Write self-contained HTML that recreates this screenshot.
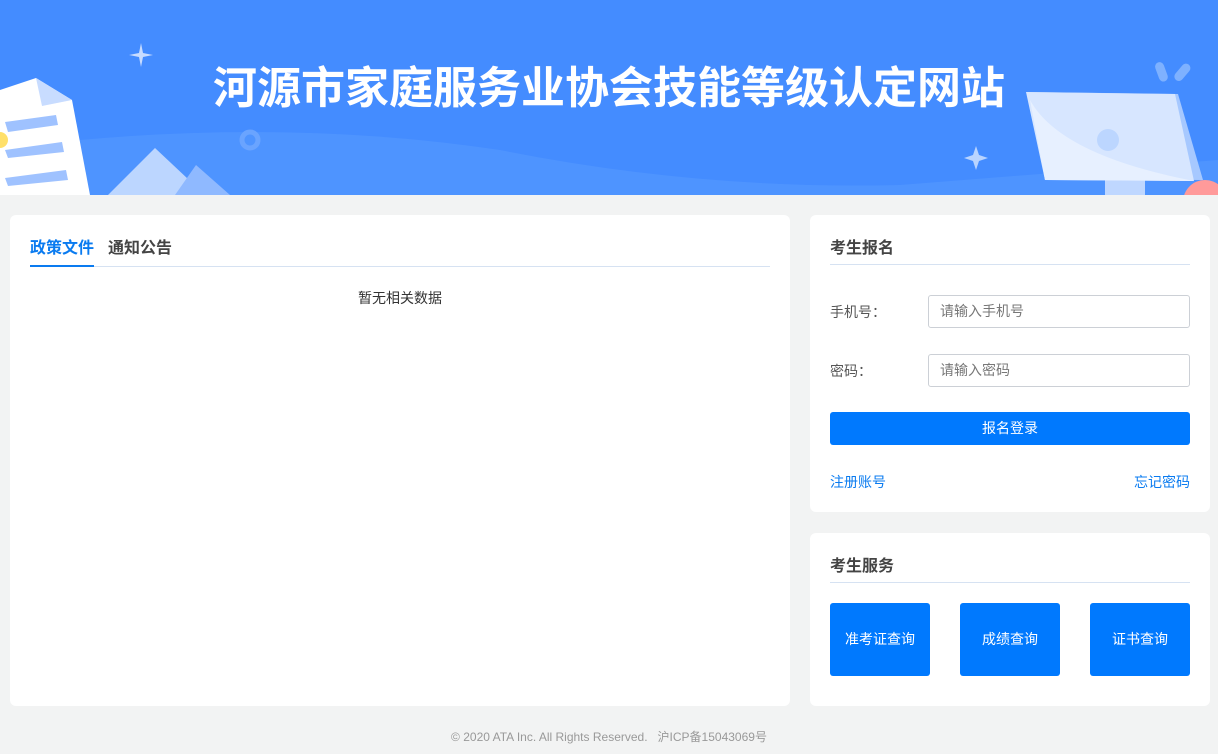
<!DOCTYPE html>
<html><head><meta charset="utf-8"><style>
*{margin:0;padding:0;box-sizing:border-box}
body{width:1218px;height:754px;background:#f2f3f3;font-family:"Liberation Sans","Noto Sans CJK SC",sans-serif;position:relative;overflow:hidden;color:#333}
.banner{position:absolute;left:0;top:0;width:1218px;height:195px;background:#448cff;overflow:hidden}
.title{position:absolute;left:0;width:1218px;top:59px;text-align:center;color:#fff;font-size:44px;font-weight:bold;line-height:60px}
.card{position:absolute;background:#fff;border-radius:6px}
.h{position:absolute;font-size:16px;font-weight:bold;color:#333}
.line{position:absolute;height:1px;background:#d6e2f2}
.lbl{position:absolute;font-size:14px;color:#555}
.inp{position:absolute;left:118px;width:262px;height:33px;border:1px solid #ccd0d6;border-radius:3px;font-size:14px;color:#777;padding-left:11px;line-height:31px}
.btn{position:absolute;background:#0079fe;color:#fff;border-radius:3px;font-size:14px;text-align:center}
.lnk{position:absolute;font-size:14px;color:#0a7bf0;top:257px}
</style></head><body>
<div class="banner">
<svg width="1218" height="195" style="position:absolute;left:0;top:0">
<path d="M80 140 Q300 120 500 150 Q700 190 900 185 L1218 160 L1218 195 L60 195Z" fill="#5297ff" opacity="0.7"/>
<path d="M141 43 L143 53 L153 55 L143 57 L141 67 L139 57 L129 55 L139 53Z" fill="#c8dcff"/>
<circle cx="250" cy="140" r="8" fill="none" stroke="#6aa4ff" stroke-width="5"/>
<polygon points="108,195 155,148 205,195" fill="#bcd6ff"/>
<polygon points="175,195 196,165 230,195" fill="#8fb9ff"/>
<polygon points="0,90 36,78 72,100 90,195 0,195" fill="#fff"/>
<polygon points="36,78 72,100 42,106" fill="#c8dcff"/>
<polygon points="5,122 56,115 58,125 8,132" fill="#9fc2ff"/>
<polygon points="5,150 62,142 64,152 8,158" fill="#9fc2ff"/>
<polygon points="5,178 66,170 68,180 8,186" fill="#9fc2ff"/>
<circle cx="0" cy="140" r="8" fill="#ffe06a"/>
<path d="M976 146 L979 155 L988 158 L979 161 L976 170 L973 161 L964 158 L973 155Z" fill="#b9d4ff"/>
<rect x="1157" y="62" width="9" height="20" rx="4.5" transform="rotate(-20 1161 72)" fill="#7eb1ff"/>
<rect x="1178" y="62" width="9" height="20" rx="4.5" transform="rotate(40 1182 72)" fill="#7eb1ff"/>
<rect x="1105" y="175" width="40" height="20" fill="#bfd7ff"/>
<polygon points="1028,92 1178,94 1203,180 1048,179" fill="#a6c8ff"/>
<polygon points="1026,92 1175,94 1194,181 1045,180" fill="#d7e6ff"/>
<path d="M1030 100 Q1060 155 1194 181 L1045 180Z" fill="#e7f0ff"/>
<circle cx="1108" cy="140" r="11" fill="#bcd6ff"/>
<circle cx="1205" cy="202" r="22" fill="#ff9a9a"/>
</svg>
<div class="title">河源市家庭服务业协会技能等级认定网站</div>
</div>

<div class="card" style="left:10px;top:215px;width:780px;height:491px">
<div class="h" style="left:20px;top:19px;color:#0a7bf0">政策文件</div>
<div class="h" style="left:98px;top:19px;color:#444">通知公告</div>
<div class="line" style="left:20px;top:51px;width:740px"></div>
<div style="position:absolute;left:20px;top:50px;width:64px;height:2px;background:#0a7bf0"></div>
<div style="position:absolute;left:0;width:780px;top:73px;text-align:center;font-size:14px;color:#333">暂无相关数据</div>
</div>

<div class="card" style="left:810px;top:215px;width:400px;height:297px">
<div class="h" style="left:20px;top:19px;color:#444">考生报名</div>
<div class="line" style="left:20px;top:49px;width:360px"></div>
<div class="lbl" style="left:20px;top:87px">手机号：</div>
<div class="inp" style="top:80px">请输入手机号</div>
<div class="lbl" style="left:20px;top:146px">密码：</div>
<div class="inp" style="top:139px">请输入密码</div>
<div class="btn" style="left:20px;top:197px;width:360px;height:33px;line-height:33px">报名登录</div>
<div class="lnk" style="left:20px">注册账号</div>
<div class="lnk" style="right:20px">忘记密码</div>
</div>

<div class="card" style="left:810px;top:533px;width:400px;height:173px">
<div class="h" style="left:20px;top:19px;color:#444">考生服务</div>
<div class="line" style="left:20px;top:49px;width:360px"></div>
<div class="btn" style="left:20px;top:70px;width:100px;height:73px;line-height:73px">准考证查询</div>
<div class="btn" style="left:150px;top:70px;width:100px;height:73px;line-height:73px">成绩查询</div>
<div class="btn" style="left:280px;top:70px;width:100px;height:73px;line-height:73px">证书查询</div>
</div>

<div style="position:absolute;left:0;width:1218px;top:728px;text-align:center;font-size:12px;color:#999">© 2020 ATA Inc. All Rights Reserved. &nbsp;&nbsp;沪ICP备15043069号</div>
</body></html>
